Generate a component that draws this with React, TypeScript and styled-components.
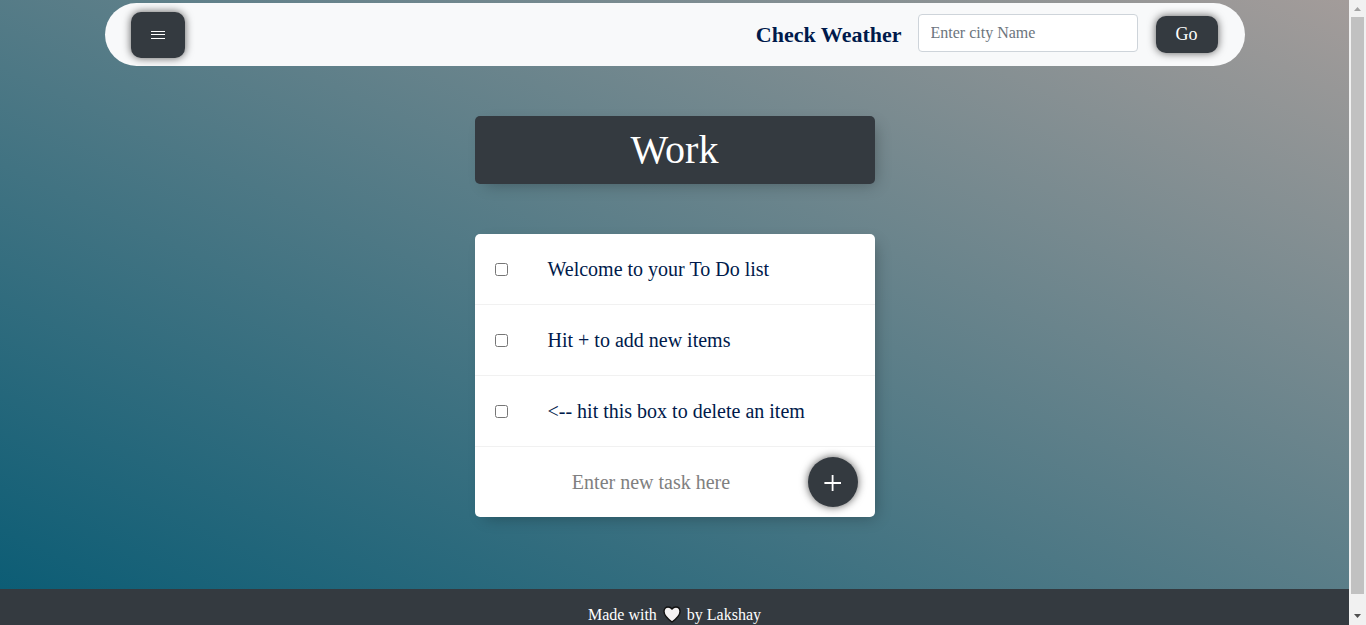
import React, { useState } from "react";
import styled, { createGlobalStyle } from "styled-components";

const dark = "#343a40";
const ink = "#001a4b";

const GlobalStyle = createGlobalStyle`
  *, *::before, *::after { box-sizing: border-box; }
  html, body { margin: 0; }
  body, button, input {
    font-family: "Liberation Serif", "Times New Roman", serif;
  }
`;

const Viewport = styled.div`
  display: flex;
  height: 100vh;
  overflow: hidden;
`;

const Page = styled.div`
  flex: 1;
  min-width: 0;
  height: 100%;
  overflow: hidden;
  display: flex;
  flex-direction: column;
  background: linear-gradient(25deg, #085b74, #a39c9a);
`;

const NavBar = styled.nav`
  width: calc(100% - 32px);
  max-width: 1140px;
  height: 63px;
  margin: 3px auto 0;
  padding: 0 27px 0 26px;
  display: flex;
  flex-shrink: 0;
  align-items: center;
  justify-content: space-between;
  border-radius: 50px;
  background: #f8f9fa;
`;

const DarkButton = styled.button`
  display: flex;
  align-items: center;
  justify-content: center;
  padding: 0;
  border: 0;
  border-radius: 10px;
  color: #fff;
  background: ${dark};
  box-shadow: 0 0 8px rgba(0, 0, 0, 0.65);
  cursor: pointer;
`;

const MenuButton = styled(DarkButton)`
  width: 54px;
  height: 46px;
`;

const GoButton = styled(DarkButton)`
  width: 62px;
  height: 37px;
  margin-left: 18px;
  font-size: 18px;
`;

const WeatherForm = styled.form`
  display: flex;
  align-items: center;
`;

const WeatherLabel = styled.label`
  margin-right: 16px;
  color: ${ink};
  font-size: 22px;
  font-weight: 700;
`;

const CityInput = styled.input`
  width: 220px;
  height: 38px;
  margin-bottom: 3px;
  padding: 6px 12px;
  border: 1px solid #ced4da;
  border-radius: 4px;
  color: #495057;
  font-size: 16px;
  background: #fff;
  &::placeholder { color: #6c757d; opacity: 1; }
`;

const Main = styled.main`
  flex: 1;
  padding: 50px 16px 72px;
  display: flex;
  flex-direction: column;
  align-items: center;
  gap: 50px;
`;

const Card = styled.section`
  width: 100%;
  max-width: 400px;
  border-radius: 5px;
  background: #fff;
  box-shadow: 5px 5px 15px -5px rgba(0, 0, 0, 0.3);
`;

const TitleCard = styled(Card)`
  padding: 10px;
  color: #fff;
  background: ${dark};
  text-align: center;
`;

const Title = styled.h1`
  margin: 0;
  font-size: 40px;
  line-height: 48px;
  font-weight: 400;
`;

const Item = styled.label`
  display: flex;
  align-items: center;
  height: 71px;
  padding: 0 20px;
  border-bottom: 1px solid #f1f1f1;
  color: ${ink};
  font-size: 20px;
`;

const Check = styled.input`
  width: 13px;
  height: 13px;
  margin: 0 40px 0 0;
`;

const NewItem = styled.form`
  display: flex;
  align-items: center;
  height: 70px;
  padding-right: 17px;
`;

const TaskInput = styled.input`
  flex: 1;
  min-width: 0;
  height: 60px;
  padding: 0 0 0 20px;
  border: 0;
  outline: 0;
  color: ${ink};
  background: transparent;
  font-size: 20px;
  text-align: center;
  &::placeholder { color: #808080; opacity: 1; }
`;

const AddButton = styled(DarkButton)`
  width: 50px;
  height: 50px;
  border-radius: 50%;
`;

const Footer = styled.footer`
  height: 36px;
  flex-shrink: 0;
  padding-top: 16px;
  display: flex;
  justify-content: center;
  gap: 6px;
  color: #fff;
  background: ${dark};
  font-size: 16px;
  line-height: 20px;
`;

const ScrollTrack = styled.div`
  width: 17px;
  flex-shrink: 0;
  display: flex;
  flex-direction: column;
  align-items: center;
  background: #f1f1f1;
`;

const ScrollArrow = styled.svg`
  width: 17px;
  height: 17px;
  flex-shrink: 0;
`;

const ScrollThumb = styled.div`
  width: 13px;
  flex: 1;
  margin-bottom: 14px;
  background: #c1c1c1;
`;

const tasks = [
  "Welcome to your To Do list",
  "Hit + to add new items",
  "<-- hit this box to delete an item",
];

export default function App() {
  const [city, setCity] = useState("");
  const [task, setTask] = useState("");
  const stop = (e: React.FormEvent) => e.preventDefault();

  return (
    <>
      <GlobalStyle />
      <Viewport>
        <Page>
          <NavBar>
            <MenuButton type="button" aria-label="Menu">
              <svg width="14" height="8" viewBox="0 0 14 8" fill="#fff" shapeRendering="crispEdges">
                <rect width="14" height="1" />
                <rect y="3" width="14" height="1" />
                <rect y="7" width="14" height="1" />
              </svg>
            </MenuButton>
            <WeatherForm onSubmit={stop}>
              <WeatherLabel htmlFor="city">Check Weather</WeatherLabel>
              <CityInput
                id="city"
                placeholder="Enter city Name"
                value={city}
                onChange={(e) => setCity(e.target.value)}
              />
              <GoButton type="submit">Go</GoButton>
            </WeatherForm>
          </NavBar>
          <Main>
            <TitleCard>
              <Title>Work</Title>
            </TitleCard>
            <Card>
              {tasks.map((text) => (
                <Item key={text}>
                  <Check type="checkbox" />
                  <span>{text}</span>
                </Item>
              ))}
              <NewItem onSubmit={stop}>
                <TaskInput
                  aria-label="New task"
                  placeholder="Enter new task here"
                  value={task}
                  onChange={(e) => setTask(e.target.value)}
                />
                <AddButton type="submit" aria-label="Add">
                  <svg width="18" height="20" viewBox="0 0 18 20" stroke="#fff" strokeWidth="1.8">
                    <path d="M8.6 3v16M0.4 11h16.6" />
                  </svg>
                </AddButton>
              </NewItem>
            </Card>
          </Main>
          <Footer>
            <span>Made with</span>
            <svg width="18" height="18" viewBox="0 0 18 18" aria-hidden="true">
              <path
                d="M9 17C6 14.8 1 11 1 6.5 1 3.8 2.8 2 5.1 2 6.900 2 8.300 3 9 4.100 9.700 3 11.100 2 12.900 2 15.200 2 17 3.800 17 6.500 17 11 12 14.800 9 17z"
                fill="#f4f2f2"
                stroke="#111"
                strokeWidth="1.4"
                strokeLinejoin="round"
              />
            </svg>
            <span>by Lakshay</span>
          </Footer>
        </Page>
        <ScrollTrack aria-hidden="true">
          <ScrollArrow viewBox="0 0 17 17">
            <path d="M5 11h7L8.500 7z" fill="#a3a3a3" />
          </ScrollArrow>
          <ScrollThumb />
          <ScrollArrow viewBox="0 0 17 17">
            <path d="M5 6h7L8.500 10z" fill="#505050" />
          </ScrollArrow>
        </ScrollTrack>
      </Viewport>
    </>
  );
}
